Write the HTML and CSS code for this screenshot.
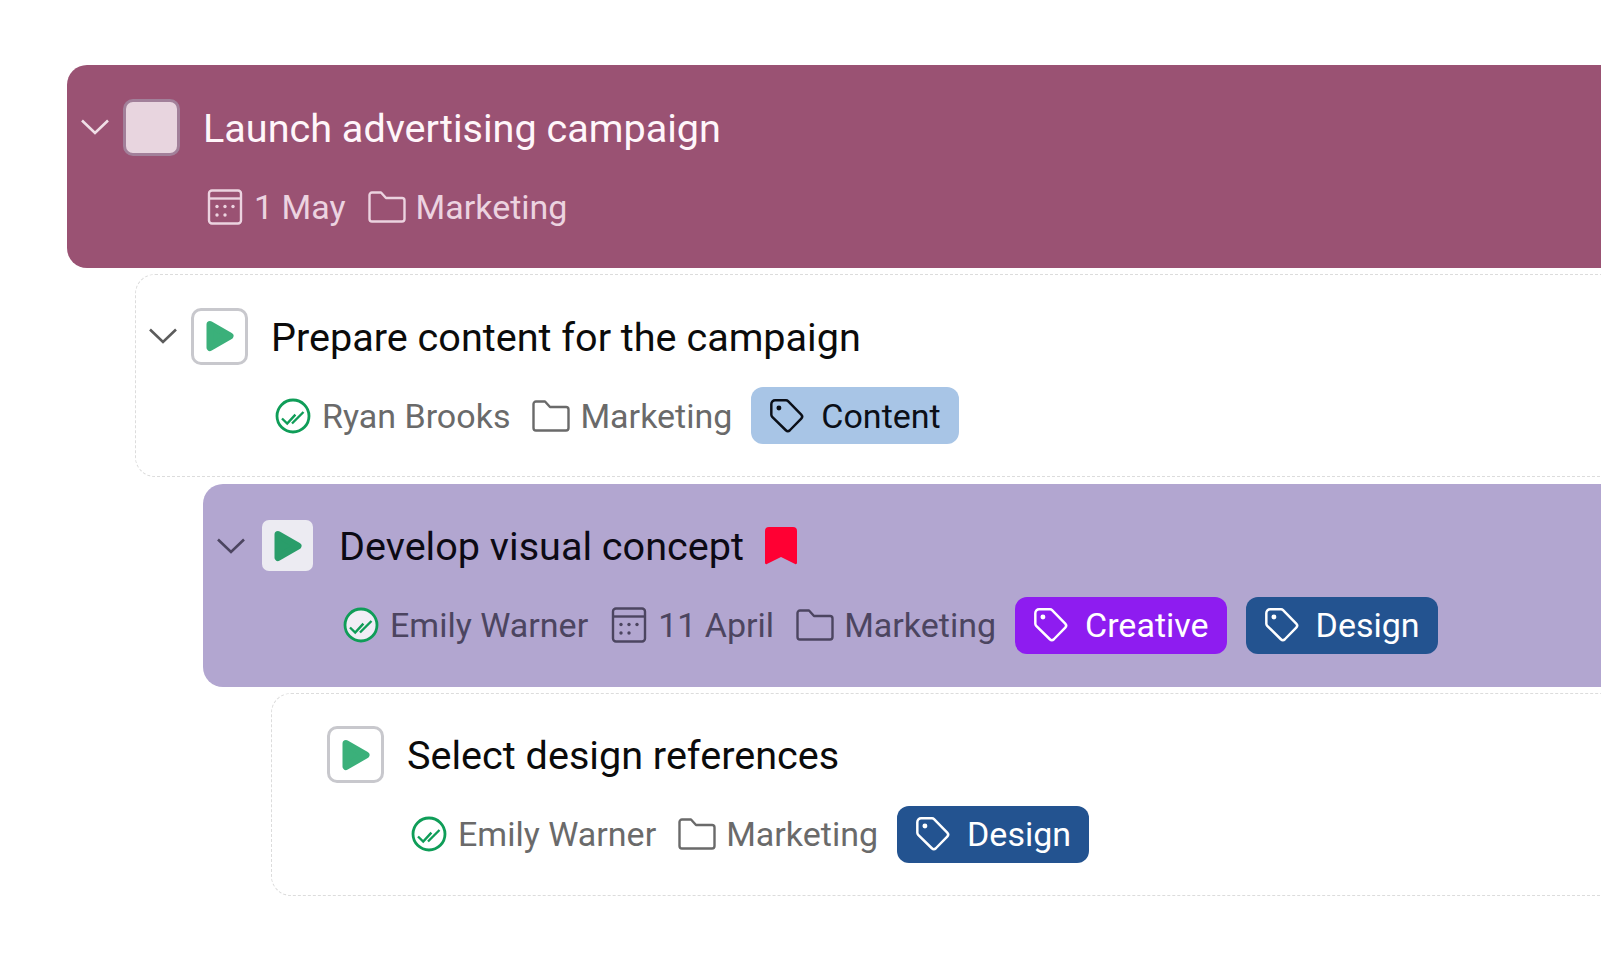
FILE: index.html
```html
<!DOCTYPE html>
<html>
<head>
  <meta charset="utf-8"/>
  <link rel="stylesheet" href="styles.css">
  <title>Task list</title>
</head>
<body>
  <!-- shared icons -->
  <svg class="sprites" xmlns="http://www.w3.org/2000/svg">
    <symbol id="i-chevron" viewBox="0 0 30 18"><path d="M2 2.5 L15 15 L28 2.5" fill="none" stroke="currentColor" stroke-width="2.6"/></symbol>
    <symbol id="i-play" viewBox="0 0 30 34"><path d="M5 5.5 L25 17 L5 28.5 Z" fill="currentColor" stroke="currentColor" stroke-width="7" stroke-linejoin="round"/></symbol>
    <symbol id="i-calendar" viewBox="0 0 38 38"><g fill="none" stroke="currentColor" stroke-width="2.4"><rect x="3" y="2.5" width="32" height="33" rx="3"/><path d="M3 10.5 H35"/></g><g fill="currentColor"><circle cx="11" cy="18.5" r="1.7"/><circle cx="19" cy="18.5" r="1.7"/><circle cx="27" cy="18.5" r="1.7"/><circle cx="11" cy="27" r="1.7"/><circle cx="19" cy="27" r="1.7"/></g></symbol>
    <symbol id="i-folder" viewBox="0 0 38 38"><path d="M1.5 7 a2.5 2.5 0 0 1 2.5-2.5 H13 L18 10 H34 a2.5 2.5 0 0 1 2.5 2.5 V31 a2.5 2.5 0 0 1-2.5 2.5 H4 a2.5 2.5 0 0 1-2.5-2.5 Z" fill="none" stroke="currentColor" stroke-width="2.4" stroke-linejoin="round"/></symbol>
    <symbol id="i-done" viewBox="0 0 38 38"><circle cx="19" cy="19" r="16" fill="var(--done-fill, none)" stroke="#0f9d58" stroke-width="2.8"/><path d="M8 21.5 L13.2 26.5 L21.4 17.6 M18 26.5 L29.5 15" fill="none" stroke="#0f9d58" stroke-width="2.4"/></symbol>
    <symbol id="i-tag" viewBox="0 0 40 40"><path d="M7.5 3.5 H19 a3 3 0 0 1 2.1.9 L35 18.5 a3 3 0 0 1 0 4.2 L23 35 a3 3 0 0 1-4.2 0 L4.4 20.8 a3 3 0 0 1-.9-2.1 V7.5 a4 4 0 0 1 4-4 Z" fill="none" stroke="currentColor" stroke-width="2.6" stroke-linejoin="round"/><circle cx="11.5" cy="11.5" r="2.6" fill="currentColor"/></symbol>
  </svg>

  <div class="task-list">

    <div class="task task-dark level-0">
      <div class="task-head">
        <svg class="chevron"><use href="#i-chevron"/></svg>
        <div class="check"></div>
        <div class="title">Launch advertising campaign</div>
      </div>
      <div class="meta">
        <span class="meta-item"><svg class="icon"><use href="#i-calendar"/></svg>1 May</span>
        <span class="meta-item"><svg class="icon"><use href="#i-folder"/></svg>Marketing</span>
      </div>
    </div>

    <div class="task task-plain level-1">
      <div class="task-head">
        <svg class="chevron"><use href="#i-chevron"/></svg>
        <div class="check"><svg class="play"><use href="#i-play"/></svg></div>
        <div class="title">Prepare content for the campaign</div>
      </div>
      <div class="meta">
        <span class="meta-item"><svg class="icon"><use href="#i-done"/></svg>Ryan Brooks</span>
        <span class="meta-item"><svg class="icon"><use href="#i-folder"/></svg>Marketing</span>
        <span class="tag tag-content"><svg class="tag-icon"><use href="#i-tag"/></svg>Content</span>
      </div>
    </div>

    <div class="task task-lilac level-2">
      <div class="task-head">
        <svg class="chevron"><use href="#i-chevron"/></svg>
        <div class="check"><svg class="play"><use href="#i-play"/></svg></div>
        <div class="title">Develop visual concept</div>
        <svg class="bookmark" viewBox="0 0 32 38"><path d="M4 0 H28 a4 4 0 0 1 4 4 V36 a1.2 1.2 0 0 1-1.9 1 L16 30 L1.9 37 a1.2 1.2 0 0 1-1.9-1 V4 a4 4 0 0 1 4-4 Z" fill="#ff0033"/></svg>
      </div>
      <div class="meta">
        <span class="meta-item"><svg class="icon"><use href="#i-done"/></svg>Emily Warner</span>
        <span class="meta-item"><svg class="icon"><use href="#i-calendar"/></svg>11 April</span>
        <span class="meta-item"><svg class="icon"><use href="#i-folder"/></svg>Marketing</span>
        <span class="tag tag-creative"><svg class="tag-icon"><use href="#i-tag"/></svg>Creative</span>
        <span class="tag tag-design"><svg class="tag-icon"><use href="#i-tag"/></svg>Design</span>
      </div>
    </div>

    <div class="task task-plain level-3">
      <div class="task-head">
        <span class="chevron"></span>
        <div class="check"><svg class="play"><use href="#i-play"/></svg></div>
        <div class="title">Select design references</div>
      </div>
      <div class="meta">
        <span class="meta-item"><svg class="icon"><use href="#i-done"/></svg>Emily Warner</span>
        <span class="meta-item"><svg class="icon"><use href="#i-folder"/></svg>Marketing</span>
        <span class="tag tag-design"><svg class="tag-icon"><use href="#i-tag"/></svg>Design</span>
      </div>
    </div>

  </div>
</body>
</html>
```

FILE: styles.css
```css
html, body {
  margin: 0;
  height: 100%;
  background: #fff;
  overflow: hidden;
}

body {
  font-family: Roboto, "Liberation Sans", sans-serif;
}

.sprites {
  display: none;
}

.task-list {
  display: flex;
  flex-flow: column;
  gap: 6.3px;
  padding: 65px 0 0 67px;
}

/* rows run off the right edge of the window */
.task {
  box-sizing: border-box;
  height: 203px;
  margin-right: -40px;
  padding: 34px 0 0 13px;
  border-radius: 20px 0 0 20px;
}

.level-1 { margin-left: 68px; }
.level-2 { margin-left: 136px; }
.level-3 { margin-left: 204px; }

.task-dark {
  background: #9a5273;
  color: #fff6fa;
  --meta: #ecd3e0;
  --chevron: #f0dfe7;
}

.task-lilac {
  background: #b2a6d0;
  color: #0c0a14;
  --meta: #4c4560;
  --chevron: #4c4560;
  --done-fill: #f0eef6;
}

.task-plain {
  background: #fff;
  color: #0b0b0b;
  border: 1px dashed #dcdcdc;
  border-right: 0;
  padding: 33px 0 0 12px;
  --meta: #6a6a6a;
  --chevron: #5c5c5c;
}

.task-head {
  display: flex;
  align-items: center;
  height: 56px;
}

.chevron {
  flex: none;
  width: 30px;
  height: 18px;
  margin-right: 13px;
  color: var(--chevron);
}

.check {
  box-sizing: border-box;
  flex: none;
  display: flex;
  align-items: center;
  justify-content: center;
  width: 57px;
  height: 57px;
  margin-right: 23px;
  border: 3px solid #c8c8cd;
  border-radius: 10px;
  background: #fff;
  color: #3bb07a;
}

.task-dark .check {
  background: #e8d5df;
  border-color: #a2809a;
}

.task-lilac .check {
  background: #ecebf2;
  background-clip: padding-box;
  border-color: transparent;
  color: #2a9d6a;
}

.play {
  width: 30px;
  height: 34px;
}

.title {
  padding-top: 3px;
  font-size: 39.6px;
  line-height: 56px;
  white-space: nowrap;
}

.bookmark {
  flex: none;
  width: 32px;
  height: 38px;
  margin-left: 21px;
}

.meta {
  display: flex;
  align-items: center;
  gap: 19px;
  height: 57px;
  margin-top: 23px;
  padding-left: 126px;
  font-size: 34px;
  color: var(--meta);
}

.meta-item {
  display: flex;
  align-items: center;
  gap: 10px;
  white-space: nowrap;
}

.meta-item + .meta-item {
  margin-left: 3px;
}

.icon {
  flex: none;
  width: 38px;
  height: 38px;
}

.tag {
  display: flex;
  align-items: center;
  height: 57px;
  padding: 0 18px 0 17px;
  border-radius: 12px;
  white-space: nowrap;
}

.tag-icon {
  flex: none;
  width: 38px;
  height: 38px;
  margin-right: 15px;
}

.tag-content {
  background: #a8c5e6;
  color: #0b0f17;
}

.tag-creative {
  background: #8e1cf0;
  color: #fff;
}

.tag-design {
  background: #235390;
  color: #fff;
}
```
